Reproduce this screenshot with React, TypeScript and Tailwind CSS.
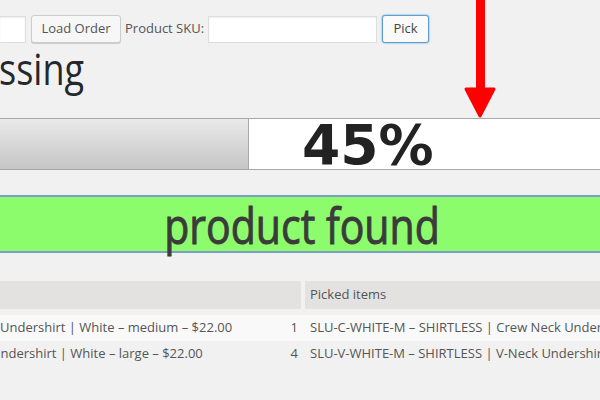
const rows = [
  { name: "Undershirt | White – medium – $22.00", qty: 1, cut: "", picked: "SLU-C-WHITE-M – SHIRTLESS | Crew Neck Undershirt | White – medium – $22.00", bg: "bg-[#f9f9f9]" },
  { name: "Undershirt | White – large – $22.00", qty: 4, cut: "-ml-[9px]", picked: "SLU-V-WHITE-M – SHIRTLESS | V-Neck Undershirt | White – large – $22.00", bg: "" },
];

const App = () => {
  return (
    <div className="relative w-[600px] h-[400px] overflow-hidden bg-[#f1f1f1] font-['Open_Sans',sans-serif]">
      {/* toolbar */}
      <div className="flex items-center pt-[15px]">
        <input className="w-[26px] h-[27px] bg-white border border-l-0 border-[#dddddd] shadow-[inset_0_1px_2px_rgba(0,0,0,0.07)]" />
        <button className="ml-[5px] h-[28px] w-[90px] rounded-[3px] border border-[#cccccc] bg-[#f7f7f7] text-[13px] text-[#555] shadow-[0_1px_0_#cccccc]">
          Load Order
        </button>
        <span className="ml-[4px] text-[13px] text-[#555]">Product SKU:</span>
        <input className="ml-[4px] w-[169px] h-[27px] bg-white border border-[#dddddd] shadow-[inset_0_1px_2px_rgba(0,0,0,0.07)]" />
        <button className="ml-[5px] h-[28px] w-[47px] rounded-[3px] border border-[#5b9dd9] bg-[#fafafa] text-[13px] text-[#444] shadow-[0_0_2px_rgba(30,140,190,0.8)]">
          Pick
        </button>
      </div>

      <h1 className="mt-[6px] h-[46px] text-[36px] leading-[46px] text-[#23282d] -ml-px">
        <span className="inline-block origin-[50%_80%] scale-y-[1.22]">ssing</span>
      </h1>

      {/* progress */}
      <div className="relative mt-[23px] h-[52px] border-y border-[#a8a8a8] bg-white">
        <div className="w-[249px] h-full border-r border-[#a8a8a8] bg-gradient-to-b from-[#e9e9e9] to-[#c6c6c6]" />
        <span className="absolute left-[302px] top-[-1px] font-['DejaVu_Sans',sans-serif] font-bold text-[55px] leading-[55px] text-[#222]">
          45%
        </span>
      </div>

      {/* status */}
      <div className="mt-[25px] h-[58px] border-y-2 border-[#7a9ec4] bg-[#8cfc6c] flex items-center justify-center">
        <span className="inline-block text-[41px] leading-none text-[#3b3b3b] [-webkit-text-stroke:0.8px_#3b3b3b] scale-y-[1.22] translate-x-[2px] translate-y-[1px]">
          product found
        </span>
      </div>

      {/* table */}
      <div className="mt-[28px] text-[13px] text-[#555]">
        <div className="flex gap-[4px] h-[28px]">
          <div className="w-[301px] bg-[#e3e2e0]" />
          <div className="flex-1 bg-[#e3e2e0] flex items-center pl-[5px]">Picked items</div>
        </div>
        <div className="mt-[6px]">
          {rows.map((r, i) => (
            <div key={i} className={`flex gap-[4px] h-[26px] items-center ${r.bg}`}>
              <div className="w-[301px] flex items-center justify-between overflow-hidden whitespace-nowrap pr-[3px]">
                <span className={r.cut}>{r.name}</span>
                <span>{r.qty}</span>
              </div>
              <div className="flex-1 whitespace-nowrap overflow-hidden pl-[5px]">{r.picked}</div>
            </div>
          ))}
        </div>
      </div>

      {/* red arrow */}
      <svg className="absolute left-[462px] top-0" width="36" height="122" viewBox="0 0 36 122">
        <rect x="14" y="0" width="9" height="94" fill="#ff0000" />
        <polygon points="4,89 32,89 18,116" fill="#ff0000" stroke="#ff0000" strokeWidth="3" strokeLinejoin="round" />
      </svg>
    </div>
  );
};

export default App;
